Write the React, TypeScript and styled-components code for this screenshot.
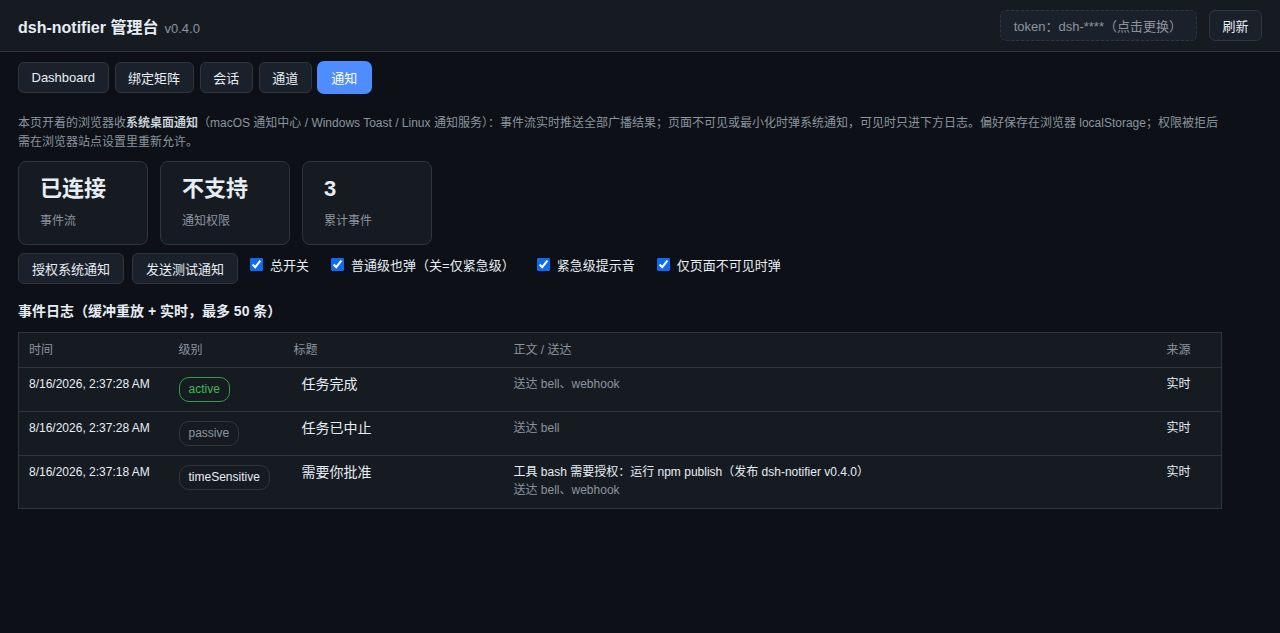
import React from "react";
import styled, { createGlobalStyle } from "styled-components";

const GlobalStyle = createGlobalStyle`
  html, body {
    margin: 0;
    padding: 0;
    background: #0d1117;
    color: #e6edf3;
    font-family: "Liberation Sans", Arial, "Noto Sans CJK SC", sans-serif;
  }
  * { box-sizing: border-box; }
`;

const tabs = ["Dashboard", "绑定矩阵", "会话", "通道", "通知"];

const stats = [
  { value: "已连接", label: "事件流" },
  { value: "不支持", label: "通知权限" },
  { value: "3", label: "累计事件" },
];

const toggles = ["总开关", "普通级也弹（关=仅紧急级）", "紧急级提示音", "仅页面不可见时弹"];

type Level = "active" | "passive" | "timeSensitive";

const events: { time: string; level: Level; title: string; body?: string; sent: string }[] = [
  { time: "8/16/2026, 2:37:28 AM", level: "active", title: "任务完成", sent: "送达 bell、webhook" },
  { time: "8/16/2026, 2:37:28 AM", level: "passive", title: "任务已中止", sent: "送达 bell" },
  {
    time: "8/16/2026, 2:37:18 AM",
    level: "timeSensitive",
    title: "需要你批准",
    body: "工具 bash 需要授权：运行 npm publish（发布 dsh-notifier v0.4.0）",
    sent: "送达 bell、webhook",
  },
];

const App = () => {
  return (
    <>
      <GlobalStyle />
      <Header>
        <Brand>
          <Title>dsh-notifier 管理台</Title>
          <Version>v0.4.0</Version>
        </Brand>
        <HeaderActions>
          <TokenBox>token：dsh-****（点击更换）</TokenBox>
          <RefreshButton>刷新</RefreshButton>
        </HeaderActions>
      </Header>
      <Main>
        <Tabs>
          {tabs.map((t) => (
            <Tab key={t} active={t === "通知"}>{t}</Tab>
          ))}
        </Tabs>
        <Intro>
          本页开着的浏览器收<strong>系统桌面通知</strong>（macOS 通知中心 / Windows Toast / Linux 通知服务）：事件流实时推送全部广播结果；页面不可见或最小化时弹系统通知，可见时只进下方日志。偏好保存在浏览器 localStorage；权限被拒后需在浏览器站点设置里重新允许。
        </Intro>
        <Stats>
          {stats.map((s) => (
            <StatCard key={s.label}>
              <StatValue>{s.value}</StatValue>
              <StatLabel>{s.label}</StatLabel>
            </StatCard>
          ))}
        </Stats>
        <Controls>
          <Button>授权系统通知</Button>
          <Button>发送测试通知</Button>
          {toggles.map((t) => (
            <Toggle key={t}>
              <input type="checkbox" defaultChecked />
              {t}
            </Toggle>
          ))}
        </Controls>
        <SectionTitle>事件日志（缓冲重放 + 实时，最多 50 条）</SectionTitle>
        <Table>
          <colgroup>
            <col style={{ width: 150 }} />
            <col style={{ width: 115 }} />
            <col style={{ width: 220 }} />
            <col />
            <col style={{ width: 65 }} />
          </colgroup>
          <thead>
            <tr>
              <Th>时间</Th>
              <Th>级别</Th>
              <Th>标题</Th>
              <Th>正文 / 送达</Th>
              <Th>来源</Th>
            </tr>
          </thead>
          <tbody>
            {events.map((e, i) => (
              <tr key={i}>
                <Td>{e.time}</Td>
                <Td><Badge level={e.level}>{e.level}</Badge></Td>
                <Td><EventTitle>{e.title}</EventTitle></Td>
                <Td>
                  {e.body && <BodyText>{e.body}</BodyText>}
                  <SentText>{e.sent}</SentText>
                </Td>
                <Td>实时</Td>
              </tr>
            ))}
          </tbody>
        </Table>
      </Main>
    </>
  );
};

export default App;

const Header = styled.header`
  display: flex;
  align-items: center;
  justify-content: space-between;
  height: 52px;
  padding: 0 18px;
  background: #161b22;
  border-bottom: 1px solid #30363d;
`;

const Brand = styled.div`
  display: flex;
  align-items: baseline;
  gap: 6px;
`;

const Title = styled.h1`
  margin: 0;
  font-size: 16px;
  font-weight: 700;
  color: #e6edf3;
`;

const Version = styled.span`
  font-size: 13px;
  color: #8b949e;
`;

const HeaderActions = styled.div`
  display: flex;
  align-items: center;
  gap: 12px;
`;

const TokenBox = styled.div`
  height: 31px;
  display: flex;
  align-items: center;
  padding: 0 14px 0 13px;
  font-size: 13px;
  color: #8b949e;
  background: #1b212b;
  border: 1px dashed #30363d;
  border-radius: 6px;
`;

const Button = styled.button`
  height: 31px;
  padding: 0 13px;
  font-family: inherit;
  font-size: 13px;
  color: #e6edf3;
  background: #1b212b;
  border: 1px solid #30363d;
  border-radius: 6px;
  cursor: pointer;
  flex-shrink: 0;
`;

const RefreshButton = styled(Button)`
  padding: 0 12.5px;
`;

const Main = styled.main`
  max-width: 1240px;
  padding: 10px 18px;
`;

const Tabs = styled.nav`
  display: flex;
  align-items: center;
  gap: 6px;
`;

const Tab = styled(Button)<{ active?: boolean }>`
  padding: 0 12.5px;
  background: ${(p) => (p.active ? "#4f8cff" : "#1b212b")};
  border-color: ${(p) => (p.active ? "#4f8cff" : "#30363d")};
  box-shadow: ${(p) => (p.active ? "0 0 0 1px #4f8cff" : "none")};
  color: ${(p) => (p.active ? "#ffffff" : "#e6edf3")};
`;

const Intro = styled.p`
  margin: 21px 0 9px;
  font-size: 12px;
  line-height: 19px;
  color: #8b949e;

  strong {
    color: #c9d1d9;
    font-weight: 700;
  }
`;

const Stats = styled.div`
  display: flex;
  gap: 12px;
`;

const StatCard = styled.div`
  width: 130px;
  height: 84px;
  padding: 13px 21px;
  background: #161b22;
  border: 1px solid #30363d;
  border-radius: 8px;
`;

const StatValue = styled.div`
  font-size: 22px;
  font-weight: 700;
  line-height: 28px;
  color: #e6edf3;
`;

const StatLabel = styled.div`
  margin-top: 8px;
  font-size: 12px;
  color: #8b949e;
`;

const Controls = styled.div`
  display: flex;
  align-items: flex-start;
  gap: 8px;
  margin-top: 8px;
`;

const Toggle = styled.label`
  display: inline-flex;
  align-items: center;
  gap: 4px;
  margin-right: 10px;
  padding-top: 2px;
  font-size: 13px;
  color: #e6edf3;

  input {
    margin: 3px 3px 3px 4px;
    accent-color: #0b6bf5;
  }
`;

const SectionTitle = styled.h2`
  margin: 16px 0 12px;
  font-size: 14px;
  font-weight: 700;
  color: #e6edf3;
`;

const Table = styled.table`
  width: 1204px;
  border-collapse: collapse;
  table-layout: fixed;
  background: #161b22;
  border: 1px solid #30363d;
`;

const Th = styled.th`
  padding: 9px 10px;
  text-align: left;
  font-size: 12px;
  line-height: 16px;
  font-weight: 400;
  color: #8b949e;
  border-bottom: 1px solid #30363d;
`;

const Td = styled.td`
  padding: 7px 10px 9px;
  vertical-align: top;
  font-size: 12px;
  line-height: 18px;
  color: #e6edf3;
  border-bottom: 1px solid #30363d;
`;

const badgeColors: Record<Level, { fg: string; border: string }> = {
  active: { fg: "#3fb950", border: "#2ea043" },
  passive: { fg: "#8b949e", border: "#30363d" },
  timeSensitive: { fg: "#e6edf3", border: "#30363d" },
};

const Badge = styled.span<{ level: Level }>`
  display: inline-block;
  vertical-align: top;
  margin-top: 2px;
  padding: 4px 9px;
  font-size: 12px;
  line-height: 15px;
  border-radius: 10px;
  color: ${(p) => badgeColors[p.level].fg};
  border: 1px solid ${(p) => badgeColors[p.level].border};
`;

const EventTitle = styled.span`
  display: inline-block;
  vertical-align: top;
  padding-left: 8px;
  font-size: 14px;
  line-height: 18px;
  color: #e6edf3;
`;

const BodyText = styled.div`
  color: #e6edf3;
`;

const SentText = styled.div`
  color: #8b949e;
`;
